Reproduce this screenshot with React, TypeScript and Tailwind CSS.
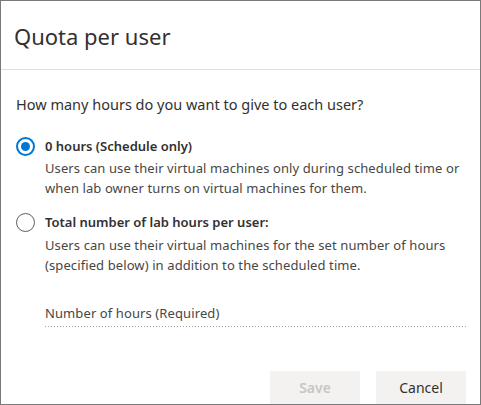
import React from "react";

export default function App() {
  const font = { fontFamily: '"Segoe UI", "Noto Sans", "Open Sans", sans-serif' };
  return (
    <div className="w-[481px] h-[405px] bg-white border border-[#7a7a7a] flex flex-col text-[#323130] overflow-hidden" style={font}>
      <div className="h-[68px] shrink-0 flex items-center pl-[13px] pt-[2px]">
        <h1 className="text-[22px] leading-none text-[#323130]">Quota per user</h1>
      </div>
      <div className="h-px bg-[#e1dfdd] shrink-0" />
      <div className="flex flex-col pl-[15px] pr-[15px]">
        <div className="mt-[24px] text-[14.5px] leading-[20px]">How many hours do you want to give to each user?</div>

        <div className="mt-[22px] flex items-center gap-[10px]">
          <span className="w-[19px] h-[19px] rounded-full border-2 border-[#0078d4] flex items-center justify-center shrink-0">
            <span className="w-[9px] h-[9px] rounded-full bg-[#0078d4]" />
          </span>
          <span className="text-[13px] font-semibold leading-[20px]">0 hours (Schedule only)</span>
        </div>
        <div className="pl-[29px] mt-[2px] text-[13px] tracking-[0.1px] leading-[20px] text-[#484644]">
          Users can use their virtual machines only during scheduled time or<br />
          when lab owner turns on virtual machines for them.
        </div>

        <div className="mt-[14px] flex items-center gap-[10px]">
          <span className="w-[19px] h-[19px] rounded-full border-[1.5px] border-[#605e5c] shrink-0" />
          <span className="text-[13px] font-semibold leading-[20px]">Total number of lab hours per user:</span>
        </div>
        <div className="pl-[29px] mt-[3px] text-[13px] tracking-[0.1px] leading-[20px] text-[#484644]">
          Users can use their virtual machines for the set number of hours<br />
          (specified below) in addition to the scheduled time.
        </div>

        <div className="pl-[29px] mt-[28px]">
          <div className="text-[13px] tracking-[0.1px] leading-[20px] text-[#484644]">Number of hours (Required)</div>
          <div className="mt-[3px] h-px w-[421px] bg-[repeating-linear-gradient(to_right,#a19f9d_0px,#a19f9d_1px,transparent_1px,transparent_3px)]" />
        </div>
      </div>
      <div className="flex-1" />
      <div className="flex justify-end gap-[16px] pr-[14px]">
        <button className="w-[90px] h-[33px] bg-[#f3f2f1] text-[#c8c6c4] text-[14px] font-semibold">Save</button>
        <button className="w-[90px] h-[33px] bg-[#f3f2f1] text-[#323130] text-[14px]">Cancel</button>
      </div>
    </div>
  );
}
